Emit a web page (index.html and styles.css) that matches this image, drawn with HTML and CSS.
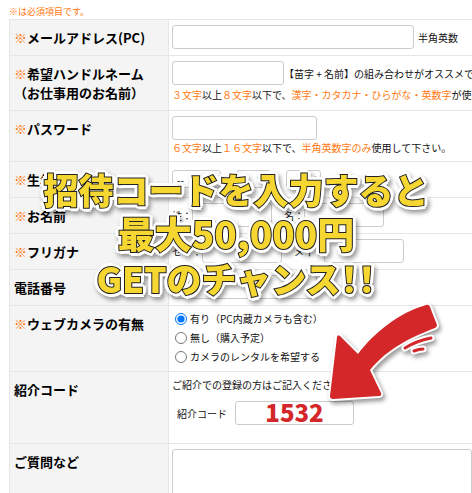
FILE: index.html
```html
<!DOCTYPE html>
<html lang="ja">
<head>
    <meta charset="UTF-8">
    <meta name="viewport" content="width=device-width, initial-scale=1.0">
    <title>登録フォーム</title>
    <link rel="stylesheet" href="styles.css">
</head>
<body>
    <main class="page">
        <p class="note accent">※は必須項目です。</p>

        <form>
            <table class="form-table">
                <tr>
                    <th><label for="mail"><span class="accent">※</span>メールアドレス(PC)</label></th>
                    <td>
                        <div class="line">
                            <input class="field field-mail" type="email" id="mail">
                            <span>半角英数</span>
                        </div>
                    </td>
                </tr>
                <tr>
                    <th><label for="handle"><span class="accent">※</span>希望ハンドルネーム<br>（お仕事用のお名前）</label></th>
                    <td>
                        <div class="line line-tight">
                            <input class="field field-handle" type="text" id="handle">
                            <span>【苗字 + 名前】の組み合わせがオススメです。</span>
                        </div>
                        <p class="help"><span class="accent">３文字</span>以上<span class="accent">８文字</span>以下で、<span class="accent">漢字・カタカナ・ひらがな・英数字</span>が使用できます。</p>
                    </td>
                </tr>
                <tr>
                    <th><label for="password"><span class="accent">※</span>パスワード</label></th>
                    <td>
                        <input class="field field-medium" type="password" id="password">
                        <p class="help"><span class="accent">６文字</span>以上<span class="accent">１６文字</span>以下で、<span class="accent">半角英数字のみ</span>使用して下さい。</p>
                    </td>
                </tr>
                <tr>
                    <th><label for="year"><span class="accent">※</span>生年月日(西暦)</label></th>
                    <td>
                        <div class="line line-date">
                            <select class="select select-year" id="year"><option>--</option></select>
                            <select class="select" aria-label="月"><option>--</option></select>
                            <select class="select" aria-label="日"><option>--</option></select>
                            <span>日</span>
                        </div>
                    </td>
                </tr>
                <tr>
                    <th><span class="accent">※</span>お名前</th>
                    <td>
                        <div class="line line-name">
                            <label for="sei">姓：</label>
                            <input class="field field-name" type="text" id="sei">
                            <label class="second" for="mei">名：</label>
                            <input class="field field-name" type="text" id="mei">
                        </div>
                    </td>
                </tr>
                <tr>
                    <th><span class="accent">※</span>フリガナ</th>
                    <td>
                        <div class="line line-name">
                            <label for="sei-kana">セイ：</label>
                            <input class="field field-name" type="text" id="sei-kana">
                            <label class="second" for="mei-kana">メイ：</label>
                            <input class="field field-name" type="text" id="mei-kana">
                        </div>
                    </td>
                </tr>
                <tr>
                    <th><label for="tel">電話番号</label></th>
                    <td><input class="field field-medium" type="tel" id="tel"></td>
                </tr>
                <tr>
                    <th><span class="accent">※</span>ウェブカメラの有無</th>
                    <td>
                        <div class="radios">
                            <label><input type="radio" name="camera" checked>有り（PC内蔵カメラも含む）</label>
                            <label><input type="radio" name="camera">無し（購入予定）</label>
                            <label><input type="radio" name="camera">カメラのレンタルを希望する</label>
                        </div>
                    </td>
                </tr>
                <tr class="row-code">
                    <th><label for="code">紹介コード</label></th>
                    <td>
                        <p>ご紹介での登録の方はご記入ください。</p>
                        <div class="line code-line">
                            <label for="code">紹介コード</label>
                            <input class="field field-code" type="text" id="code" value="1532">
                        </div>
                    </td>
                </tr>
                <tr>
                    <th><label for="question">ご質問など</label></th>
                    <td><textarea class="field field-area" id="question"></textarea></td>
                </tr>
            </table>
        </form>

        <!-- Campaign caption over the form -->
        <p class="caption">招待コードを入力すると<br><span class="amount">最大50,000円</span><br>GETのチャンス<span class="marks">！！</span></p>

        <!-- Arrow pointing at the code -->
        <svg class="arrow" viewBox="0 0 120 110" width="120" height="110" aria-hidden="true">
            <g class="arrow-outline">
                <path d="M104 6 Q107 5 108 8 L115 26 Q115 28 113 29 C92 37 67 48 48 71 L59 94 Q60 97 57 97 L11 100 Q8 100 8 97 L15 38 Q16 35 18 37 L36 55 C52 34 76 14 104 6Z"/>
                <path class="dash" d="M83 49 Q94 42 109 39M92 52 Q97 50 101 50"/>
            </g>
            <path d="M104 6 Q107 5 108 8 L115 26 Q115 28 113 29 C92 37 67 48 48 71 L59 94 Q60 97 57 97 L11 100 Q8 100 8 97 L15 38 Q16 35 18 37 L36 55 C52 34 76 14 104 6Z"/>
            <path class="dash" d="M83 49 Q94 42 109 39M92 52 Q97 50 101 50"/>
        </svg>
    </main>
</body>
</html>
```

FILE: styles.css
```css
:root {
    --accent: #ff7a12;
    --line: #e6e6e6;
    --field-border: #cccccc;
    --label-bg: #f4f4f4;
    --red: #d3272a;
    --yellow: #f6d631;
}

* {
    box-sizing: border-box;
}

body {
    margin: 0;
    background: #ffffff;
    color: #111111;
    font-family: "Noto Sans CJK JP", sans-serif;
    font-size: 10px;
    line-height: 15px;
}

p {
    margin: 0;
}

.page {
    position: relative;
    height: 100vh;
    padding: 4px 0 0 9px;
    overflow: hidden;
}

.accent {
    color: var(--accent);
}

.note {
    font-size: 9px;
}

.form-table {
    width: 100%;
    table-layout: fixed;
    border-collapse: collapse;
}

th, td {
    border-top: 1px solid var(--line);
    padding: 5px 0 6px 3px;
    text-align: left;
    vertical-align: top;
    white-space: nowrap;
}

th {
    width: 159px;
    padding: 8px 0 8px 4px;
    border-left: 1px solid var(--line);
    border-right: 1px solid var(--line);
    background: var(--label-bg);
    color: #000000;
    font-size: 13px;
    font-weight: 700;
    line-height: 19px;
}

th .accent {
    font-weight: 400;
}

.line {
    display: flex;
    align-items: center;
    gap: 4px;
}

.line-tight {
    gap: 0;
    padding-bottom: 2px;
}

.field {
    display: block;
    height: 24px;
    padding: 0 4px;
    border: 1px solid var(--field-border);
    border-radius: 3px;
    background: #ffffff;
    font: inherit;
}

.field-mail {
    width: 242px;
}

.field-handle {
    width: 112px;
}

.field-medium {
    width: 145px;
}

.field-name {
    width: 80px;
}

.line-date {
    gap: 15px;
    height: 24px;
}

.line-date span {
    margin-left: -10px;
}

.select {
    width: 35px;
    height: 18px;
    border: 1px solid var(--field-border);
    border-radius: 3px;
    background: #ffffff;
    font: inherit;
}

.select-year {
    width: 49px;
}

.line-name {
    gap: 0;
}

.second {
    margin-left: 12px;
}

.radios {
    display: flex;
    flex-direction: column;
    gap: 4px;
    padding: 0 0 1px 3px;
}

.radios label {
    display: flex;
    align-items: center;
    gap: 3px;
}

.radios input {
    width: 12px;
    height: 12px;
    margin: 0;
}

.row-code td {
    height: 72px;
}

.code-line {
    gap: 8px;
    padding: 9px 0 0 5px;
}

.field-code {
    width: 119px;
    padding-bottom: 4px;
    color: var(--red);
    font-size: 24px;
    font-weight: 900;
    text-align: center;
}

.field-area {
    width: 100%;
    height: 120px;
}

.caption {
    position: absolute;
    top: 167px;
    left: 0;
    right: 0;
    color: var(--yellow);
    font-size: 35px;
    font-weight: 900;
    line-height: 44px;
    text-align: center;
    white-space: nowrap;
    -webkit-text-stroke: 2px #222222;
    paint-order: stroke fill;
    filter:
        drop-shadow(2px 1px 0 #ffffff)
        drop-shadow(-2px -1px 0 #ffffff)
        drop-shadow(1px -2px 0 #ffffff)
        drop-shadow(-1px 2px 0 #ffffff)
        drop-shadow(2px 3px 2px rgba(0, 0, 0, 0.4));
}

.amount {
    font-size: 37px;
}

.marks {
    font-feature-settings: "palt";
}

.arrow {
    position: absolute;
    top: 299px;
    left: 322px;
    fill: var(--red);
    overflow: visible;
}

.arrow-outline {
    fill: #ffffff;
    stroke: #ffffff;
    stroke-width: 4;
    stroke-linejoin: round;
    filter: drop-shadow(2px 3px 2px rgba(0, 0, 0, 0.4));
}

.dash {
    fill: none;
    stroke: var(--red);
    stroke-width: 3;
    stroke-linecap: round;
}

.arrow-outline .dash {
    stroke: #ffffff;
    stroke-width: 7;
}
```
